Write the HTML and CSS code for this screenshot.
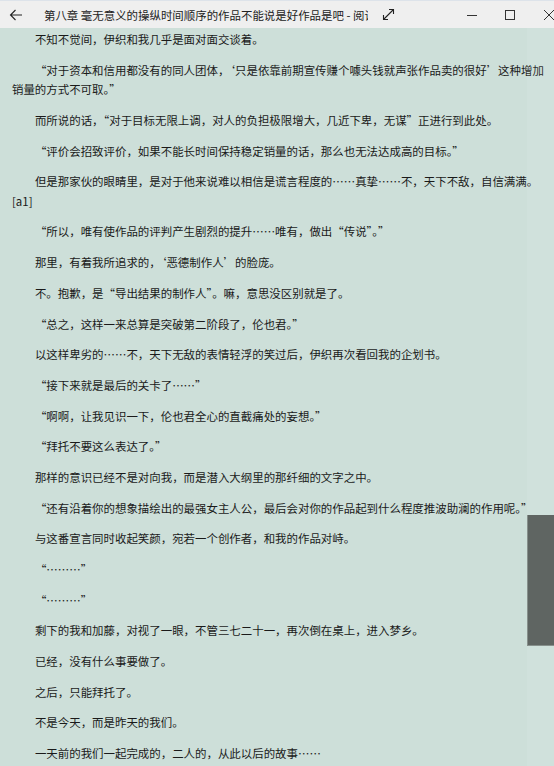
FILE: index.html
```html
<!DOCTYPE html>
<html lang="zh-CN">
<head>
<meta charset="utf-8">
<title>第八章</title>
<link rel="stylesheet" href="styles.css">
</head>
<body>
<div class="window">
  <header class="titlebar">
    <div class="back">
      <svg width="14" height="12" viewBox="0 0 14 12"><path d="M13 6H1.5M6.5 1L1.5 6l5 5" fill="none" stroke="#222" stroke-width="1.1"/></svg>
    </div>
    <div class="title">第八章 毫无意义的操纵时间顺序的作品不能说是好作品是吧 - 阅读</div>
    <div class="expand">
      <svg width="13" height="13" viewBox="0 0 13 13"><path d="M1.5 11.5L11.5 1.5M7 1.5h4.5V6M1.5 7v4.5H6" fill="none" stroke="#222" stroke-width="1.1"/></svg>
    </div>
    <div class="spacer"></div>
    <div class="controls">
      <div class="ctl"><svg width="12" height="12" viewBox="0 0 12 12"><path d="M1 6.5h10" stroke="#333" stroke-width="1"/></svg></div>
      <div class="ctl"><svg width="12" height="12" viewBox="0 0 12 12"><rect x="1.5" y="1.5" width="9" height="9" fill="none" stroke="#333" stroke-width="1"/></svg></div>
      <div class="ctl"><svg width="12" height="12" viewBox="0 0 12 12"><path d="M1 1l10 10M11 1L1 11" stroke="#333" stroke-width="1"/></svg></div>
    </div>
  </header>
  <main class="content">
    <p>不知不觉间，伊织和我几乎是面对面交谈着。</p>
    <p>“对于资本和信用都没有的同人团体，‘只是依靠前期宣传赚个噱头钱就声张作品卖的很好’这种增加销量的方式不可取。”</p>
    <p>而所说的话，“对于目标无限上调，对人的负担极限增大，几近下卑，无谋”正进行到此处。</p>
    <p>“评价会招致评价，如果不能长时间保持稳定销量的话，那么也无法达成高的目标。”</p>
    <p>但是那家伙的眼睛里，是对于他来说难以相信是谎言程度的……真挚……不，天下不敌，自信满满。[a1]</p>
    <p>“所以，唯有使作品的评判产生剧烈的提升……唯有，做出“传说”。”</p>
    <p>那里，有着我所追求的，‘恶德制作人’的脸庞。</p>
    <p>不。抱歉，是“导出结果的制作人”。嘛，意思没区别就是了。</p>
    <p>“总之，这样一来总算是突破第二阶段了，伦也君。”</p>
    <p>以这样卑劣的……不，天下无敌的表情轻浮的笑过后，伊织再次看回我的企划书。</p>
    <p>“接下来就是最后的关卡了……”</p>
    <p>“啊啊，让我见识一下，伦也君全心的直截痛处的妄想。”</p>
    <p>“拜托不要这么表达了。”</p>
    <p>那样的意识已经不是对向我，而是潜入大纲里的那纤细的文字之中。</p>
    <p>“还有沿着你的想象描绘出的最强女主人公，最后会对你的作品起到什么程度推波助澜的作用呢。”</p>
    <p>与这番宣言同时收起笑颜，宛若一个创作者，和我的作品对峙。</p>
    <p>“………”</p>
    <p>“………”</p>
    <p>剩下的我和加藤，对视了一眼，不管三七二十一，再次倒在桌上，进入梦乡。</p>
    <p>已经，没有什么事要做了。</p>
    <p>之后，只能拜托了。</p>
    <p>不是今天，而是昨天的我们。</p>
    <p>一天前的我们一起完成的，二人的，从此以后的故事……</p>
  </main>
  <div class="scroll-track"><div class="scroll-thumb"></div></div>
</div>
</body>
</html>
```

FILE: styles.css
```css
html, body {
  margin: 0;
  padding: 0;
  width: 554px;
  height: 766px;
  overflow: hidden;
}
body {
  font-family: "Noto Sans CJK SC", "Noto Sans", sans-serif;
  color: #1a1a1a;
  background: #cddfd9;
}
.window {
  position: relative;
  width: 554px;
  height: 766px;
  display: flex;
  flex-direction: column;
  overflow: hidden;
}
.titlebar {
  flex: none;
  height: 27px;
  border-top: 1px solid #dde3ea;
  background: #efefef;
  display: flex;
  align-items: center;
  font-size: 11.45px;
  color: #222;
}
.back {
  width: 32px;
  display: flex;
  justify-content: center;
  align-items: center;
}
.title {
  margin-left: 12px;
  width: 324px;
  white-space: nowrap;
  overflow: hidden;
}
.expand {
  margin-left: 14px;
  display: flex;
  align-items: center;
}
.spacer {
  flex: 1;
}
.controls {
  display: flex;
  margin-right: -14px;
}
.ctl {
  width: 38.5px;
  display: flex;
  justify-content: center;
  align-items: center;
}
.content {
  flex: 1;
  padding: 2px 0 0 12px;
  font-size: 11.45px;
  line-height: 19.5px;
}
.content p {
  margin: 0 0 11.2px;
  text-indent: 2em;
}
.scroll-track {
  position: absolute;
  top: 28px;
  right: 0;
  bottom: 0;
  width: 27px;
  background: rgba(255, 255, 255, 0.08);
}
.scroll-thumb {
  position: absolute;
  top: 487px;
  left: 0;
  right: 0;
  height: 130px;
  background: #5f6562;
  border-left: 1px solid #87908c;
  border-bottom: 1px solid #87908c;
}
```
